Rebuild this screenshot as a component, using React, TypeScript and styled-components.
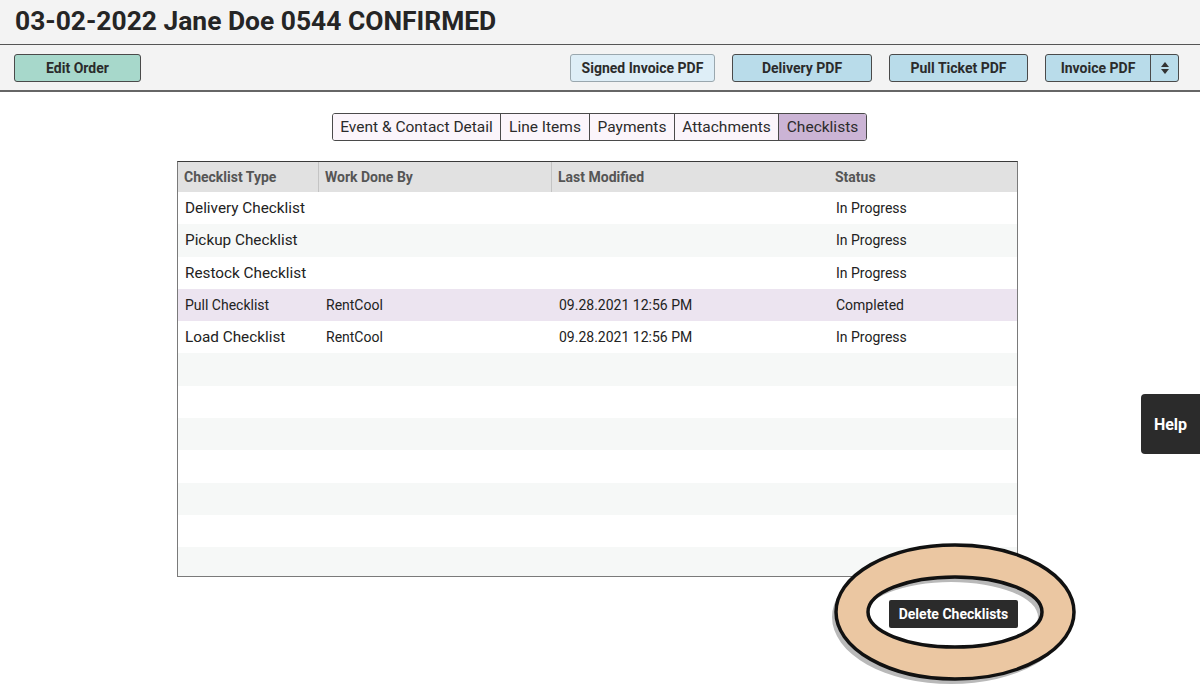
import styled, { createGlobalStyle } from 'styled-components';

const GlobalStyle = createGlobalStyle`
  html, body {
    margin: 0;
    padding: 0;
    background: #ffffff;
    font-family: Roboto, "Liberation Sans", Arial, sans-serif;
    color: #222;
  }
`;

const Page = styled.div`
  position: relative;
  width: 1200px;
  height: 692px;
  overflow: hidden;
  background: #fff;
`;

const TitleBar = styled.div`
  height: 45px;
  background: #f3f3f3;
  border-bottom: 1px solid #555;
  display: flex;
  align-items: center;
  padding: 0 15px 2px;
  box-sizing: border-box;
`;

const Title = styled.h1`
  margin: 0;
  font-size: 26.4px;
  font-weight: 700;
  color: #252525;
`;

const Toolbar = styled.div`
  height: 47px;
  background: #f3f3f3;
  border-bottom: 2px solid #666;
  display: flex;
  align-items: center;
  justify-content: space-between;
  padding: 0 21px 0 14px;
  box-sizing: border-box;
`;

const ButtonGroup = styled.div`
  display: flex;
  gap: 17px;
`;

const ToolButton = styled.button<{ $bg: string; $border?: string; $w: number }>`
  width: ${p => p.$w}px;
  height: 28px;
  background: ${p => p.$bg};
  border: 1px solid ${p => p.$border || '#4a4a4a'};
  border-radius: 3px;
  font-family: Roboto, "Liberation Sans", Arial, sans-serif;
  font-weight: 700;
  font-size: 14px;
  color: #2b2b2b;
  cursor: pointer;
  padding: 0;
`;

const SplitButton = styled.div`
  display: flex;
  height: 28px;
  border: 1px solid #4a4a4a;
  border-radius: 3px;
  background: #b9dcea;
  box-sizing: border-box;
  overflow: hidden;
`;

const SplitMain = styled.button`
  width: 105px;
  border: none;
  border-right: 1px solid #4a4a4a;
  background: transparent;
  font-family: Roboto, "Liberation Sans", Arial, sans-serif;
  font-weight: 700;
  font-size: 14px;
  color: #2b2b2b;
  padding: 0;
`;

const SplitArrow = styled.button`
  width: 27px;
  border: none;
  background: transparent;
  display: flex;
  align-items: center;
  justify-content: center;
  padding: 0;
`;

const Main = styled.div`
  display: flex;
  flex-direction: column;
  align-items: center;
  padding-top: 21px;
`;

const Tabs = styled.div`
  display: flex;
  border: 1px solid #4a4a4a;
  border-radius: 3px;
  overflow: hidden;
  height: 28px;
  box-sizing: border-box;
  margin-left: -1px;
`;

const Tab = styled.div<{ $active?: boolean; $w: number }>`
  width: ${p => p.$w}px;
  display: flex;
  align-items: center;
  justify-content: center;
  background: ${p => (p.$active ? '#cbb4d5' : '#fbf5fb')};
  border-left: 1px solid #4a4a4a;
  font-size: 15.5px;
  color: #2b2b2b;
  box-sizing: border-box;
  &:first-child {
    border-left: none;
  }
`;

const Table = styled.div`
  margin-top: 20px;
  width: 841px;
  height: 416px;
  border: 1px solid #7a7a7a;
  border-top: 1px solid #3a3a3a;
  box-sizing: border-box;
  overflow: hidden;
  margin-left: -5px;
`;

const cols = '141px 233px 277px 1fr';

const HeadRow = styled.div`
  display: grid;
  grid-template-columns: ${cols};
  height: 30px;
  background: #e1e1e1;
`;

const HeadCell = styled.div<{ $sep?: boolean }>`
  display: flex;
  align-items: center;
  padding-left: 6px;
  font-size: 14px;
  font-weight: 700;
  color: #555;
  border-right: ${p => (p.$sep ? '1px solid #c4c4c4' : 'none')};
`;

const Row = styled.div<{ $tone: 'white' | 'stripe' | 'selected' }>`
  display: grid;
  grid-template-columns: ${cols};
  height: 32.3px;
  background: ${p =>
    p.$tone === 'selected' ? '#ece4f0' : p.$tone === 'stripe' ? '#f6f8f7' : '#ffffff'};
`;

const Cell = styled.div<{ $big?: boolean }>`
  display: flex;
  align-items: center;
  padding-left: 7px;
  font-size: ${p => (p.$big ? '15.3px' : '14px')};
  color: #222;
  white-space: nowrap;
`;

const ActionRow = styled.div`
  width: 841px;
  display: flex;
  justify-content: flex-end;
  margin-top: 23px;
  margin-left: -5px;
`;

const DarkButton = styled.button`
  position: relative;
  z-index: 2;
  width: 129px;
  height: 28px;
  background: #2b2b2b;
  border: none;
  border-radius: 2px;
  color: #fff;
  font-family: Roboto, "Liberation Sans", Arial, sans-serif;
  font-weight: 700;
  font-size: 14px;
  padding: 0;
`;

const HelpTab = styled.div`
  position: absolute;
  right: 0;
  top: 394px;
  width: 59px;
  height: 60px;
  background: #2b2b2b;
  border-radius: 4px 0 0 4px;
  color: #fff;
  font-weight: 700;
  font-size: 16px;
  display: flex;
  align-items: center;
  justify-content: center;
`;

const Highlight = styled.svg`
  position: absolute;
  left: 826px;
  top: 538px;
  z-index: 1;
  pointer-events: none;
`;

const rows: { type: string; by: string; mod: string; status: string; big: boolean }[] = [
  { type: 'Delivery Checklist', by: '', mod: '', status: 'In Progress', big: true },
  { type: 'Pickup Checklist', by: '', mod: '', status: 'In Progress', big: true },
  { type: 'Restock Checklist', by: '', mod: '', status: 'In Progress', big: true },
  { type: 'Pull Checklist', by: 'RentCool', mod: '09.28.2021 12:56 PM', status: 'Completed', big: false },
  { type: 'Load Checklist', by: 'RentCool', mod: '09.28.2021 12:56 PM', status: 'In Progress', big: true },
];

const SELECTED = 3;
const TOTAL_ROWS = 12;

export default function App() {
  const ringPath = (cx: number, cy: number) =>
    `M ${cx - 119} ${cy} a 119 67 0 1 0 238 0 a 119 67 0 1 0 -238 0 Z ` +
    `M ${cx - 87} ${cy} a 87 35 0 1 1 174 0 a 87 35 0 1 1 -174 0 Z`;

  return (
    <Page>
      <GlobalStyle />
      <TitleBar>
        <Title>03-02-2022 Jane Doe 0544 CONFIRMED</Title>
      </TitleBar>
      <Toolbar>
        <ToolButton $bg="#a7d8cb" $w={127}>Edit Order</ToolButton>
        <ButtonGroup>
          <ToolButton $bg="#deeef7" $border="#9aa7ae" $w={145}>Signed Invoice PDF</ToolButton>
          <ToolButton $bg="#b9dcea" $w={140}>Delivery PDF</ToolButton>
          <ToolButton $bg="#b9dcea" $w={139}>Pull Ticket PDF</ToolButton>
          <SplitButton>
            <SplitMain>Invoice PDF</SplitMain>
            <SplitArrow>
              <svg width="10" height="16" viewBox="0 0 10 16">
                <path d="M5 2 L9 7 H1 Z" fill="#333" />
                <path d="M5 14 L9 9 H1 Z" fill="#333" />
              </svg>
            </SplitArrow>
          </SplitButton>
        </ButtonGroup>
      </Toolbar>

      <Main>
        <Tabs>
          <Tab $w={167}>Event &amp; Contact Detail</Tab>
          <Tab $w={89}>Line Items</Tab>
          <Tab $w={85}>Payments</Tab>
          <Tab $w={104}>Attachments</Tab>
          <Tab $w={88} $active>Checklists</Tab>
        </Tabs>

        <Table>
          <HeadRow>
            <HeadCell $sep>Checklist Type</HeadCell>
            <HeadCell $sep>Work Done By</HeadCell>
            <HeadCell>Last Modified</HeadCell>
            <HeadCell>Status</HeadCell>
          </HeadRow>
          {Array.from({ length: TOTAL_ROWS }).map((_, i) => {
            const r = rows[i];
            const tone = i === SELECTED ? 'selected' : i % 2 === 1 ? 'stripe' : 'white';
            return (
              <Row key={i} $tone={tone}>
                <Cell $big={r?.big}>{r?.type}</Cell>
                <Cell>{r?.by}</Cell>
                <Cell>{r?.mod}</Cell>
                <Cell>{r?.status}</Cell>
              </Row>
            );
          })}
        </Table>

        <ActionRow>
          <DarkButton>Delete Checklists</DarkButton>
        </ActionRow>
      </Main>

      <Highlight width="260" height="154" viewBox="0 0 260 154">
        <path d={ringPath(125, 79)} fill="#b9b9b9" fillRule="evenodd" />
        <path d={ringPath(129, 74)} fill="#ebc7a2" fillRule="evenodd" stroke="#111" strokeWidth="3.5" />
      </Highlight>

      <HelpTab>Help</HelpTab>
    </Page>
  );
}
